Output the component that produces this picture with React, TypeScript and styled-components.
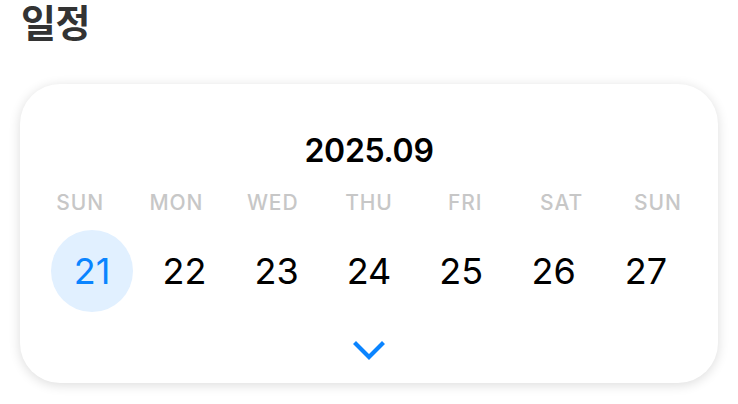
import React from "react";
import styled, { createGlobalStyle } from "styled-components";

const Global = createGlobalStyle`
  html, body { margin: 0; padding: 0; background: #ffffff; }
  body { font-family: Inter, "Noto Sans", "Noto Sans CJK KR", sans-serif; }
`;

const Page = styled.div`
  width: 738px;
  height: 404px;
  box-sizing: border-box;
  padding: 0 20px;
  display: flex;
  flex-direction: column;
`;

const Title = styled.h1`
  margin: -7px 0 0 1px;
  font-family: "Noto Sans CJK KR", sans-serif;
  font-weight: 700;
  font-size: 38px;
  line-height: 56px;
  color: #333333;
  letter-spacing: -0.5px;
`;

const Card = styled.section`
  margin-top: 35px;
  width: 698px;
  height: 299px;
  box-sizing: border-box;
  border-radius: 40px;
  background: #ffffff;
  box-shadow: 0 2px 12px rgba(0, 0, 0, 0.14);
  padding: 51px 0 0 0;
  display: flex;
  flex-direction: column;
  align-items: center;
`;

const Month = styled.div`
  font-family: Inter, sans-serif;
  font-weight: 600;
  font-size: 32px;
  line-height: 32px;
  color: #000000;
  letter-spacing: -0.3px;
`;

const WeekRow = styled.div`
  margin-top: 25px;
  width: 674px;
  display: grid;
  grid-template-columns: repeat(7, 1fr);
`;

const WeekLabel = styled.div`
  text-align: center;
  font-family: Inter, sans-serif;
  font-weight: 500;
  font-size: 21px;
  line-height: 21px;
  color: #c7c7c7;
  letter-spacing: 0.9px;
`;

const DayRow = styled.div`
  margin-top: 17px;
  width: 646px;
  display: grid;
  grid-template-columns: repeat(7, 1fr);
`;

const DayCell = styled.div`
  display: flex;
  justify-content: center;
`;

const Day = styled.div<{ $selected?: boolean }>`
  width: 82px;
  height: 82px;
  border-radius: 50%;
  display: flex;
  align-items: center;
  justify-content: center;
  background: ${(p) => (p.$selected ? "#e1f0ff" : "transparent")};
  color: ${(p) => (p.$selected ? "#0a84ff" : "#000000")};
  font-family: Inter, sans-serif;
  font-weight: 400;
  font-size: 36px;
  line-height: 36px;
`;

const Toggle = styled.div`
  margin-top: 28px;
  width: 32px;
  height: 22px;
  display: flex;
  align-items: center;
  justify-content: center;
`;

const labels = ["SUN", "MON", "WED", "THU", "FRI", "SAT", "SUN"];
const days = [21, 22, 23, 24, 25, 26, 27];

export default function App() {
  return (
    <>
      <Global />
      <Page>
        <Title>일정</Title>
        <Card>
          <Month>2025.09</Month>
          <WeekRow>
            {labels.map((l, i) => (
              <WeekLabel key={i}>{l}</WeekLabel>
            ))}
          </WeekRow>
          <DayRow>
            {days.map((d) => (
              <DayCell key={d}>
                <Day $selected={d === 21}>{d}</Day>
              </DayCell>
            ))}
          </DayRow>
          <Toggle>
            <svg width="32" height="22" viewBox="0 0 32 22">
              <path
                d="M3 4 L16 17 L29 4"
                fill="none"
                stroke="#0a84ff"
                strokeWidth="4.2"
                strokeLinecap="square"
                strokeLinejoin="miter"
              />
            </svg>
          </Toggle>
        </Card>
      </Page>
    </>
  );
}
